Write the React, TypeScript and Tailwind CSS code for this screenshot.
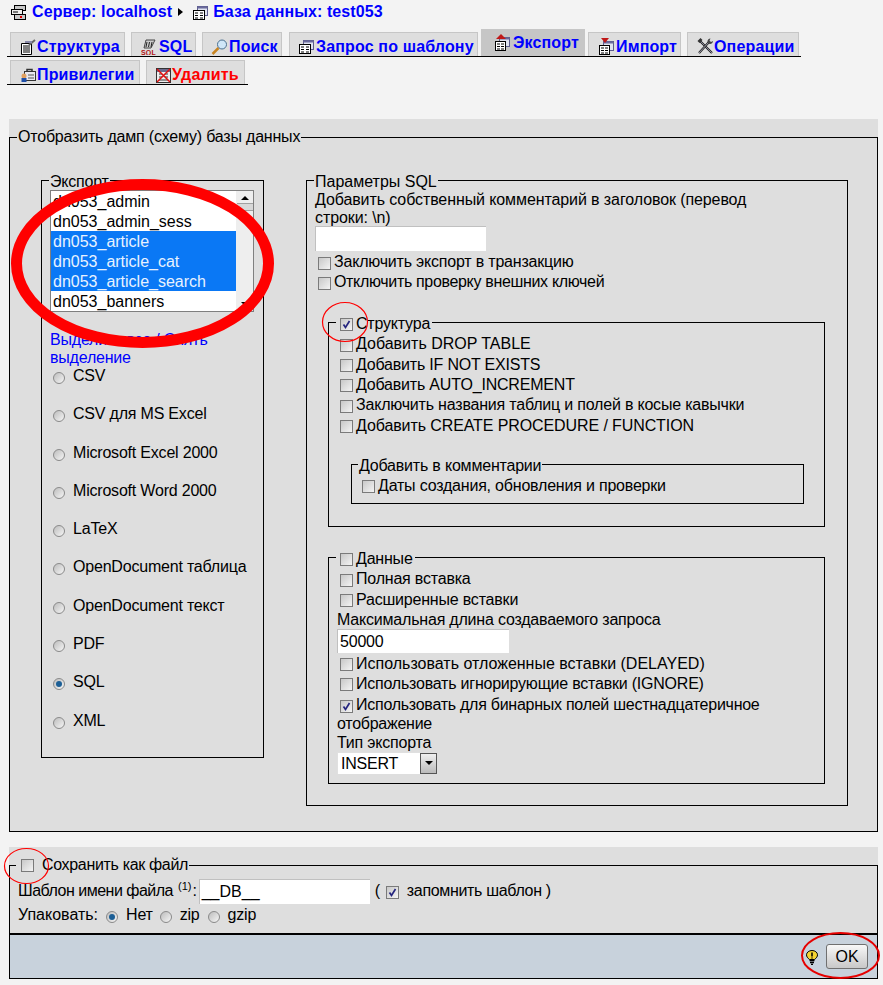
import React from "react";

const Check = ({ on = false, className = "" }: { on?: boolean; className?: string }) => (
  <span className={`inline-flex shrink-0 w-[13px] h-[13px] border border-[#7a7a7a] bg-gradient-to-br from-[#c8c8c8] to-[#f4f4f4] items-center justify-center align-[-2px] ${className}`}>
    {on && (
      <svg width="11" height="11" viewBox="0 0 11 11">
        <path d="M2.5 5.5 L4.5 8.5 L8.5 2" fill="none" stroke="#24247e" strokeWidth="1.7" />
      </svg>
    )}
  </span>
);

const Radio = ({ on = false }: { on?: boolean }) => (
  <span className="inline-flex shrink-0 w-[12px] h-[12px] rounded-full border border-[#8a8a8a] bg-gradient-to-br from-[#bdbdbd] to-[#f6f6f6] items-center justify-center">
    {on && <span className="w-[6px] h-[6px] rounded-full bg-[#1c5f96]" />}
  </span>
);

const Row = ({ on, children, className = "h-[20.4px]" }: { on?: boolean; children: React.ReactNode; className?: string }) => (
  <div className={`flex items-center pt-[2px] ${className}`}>
    <Check on={on} className="mr-[3px] mt-[2px]" />
    <span>{children}</span>
  </div>
);

const DbIcon = () => (
  <svg width="15" height="15" viewBox="0 0 15 15" className="shrink-0">
    <rect x="4.5" y="1.5" width="10" height="9" fill="#dfe3f0" stroke="#5c5c8c" />
    <rect x="4.5" y="1.5" width="10" height="2" fill="#6a6a9c" />
    <rect x="0.5" y="5.5" width="11" height="9" fill="#fff" stroke="#000" />
    <path d="M2 8h3M7 8h3M2 10.5h3M7 10.5h3M2 13h3M7 13h3" stroke="#000" />
  </svg>
);

const ServerIcon = () => (
  <svg width="15" height="15" viewBox="0 0 15 15" className="shrink-0">
    <rect x="3.5" y="0.5" width="11" height="5" fill="#c8c8c8" stroke="#000" />
    <rect x="0.5" y="4.5" width="11" height="5" fill="#eee" stroke="#000" />
    <rect x="3.5" y="9.5" width="11" height="5" fill="#c8c8c8" stroke="#000" />
    <rect x="9" y="11" width="2" height="2" fill="#d00" />
    <path d="M2 7h5" stroke="#000" />
  </svg>
);

const StructIcon = () => (
  <svg width="15" height="16" viewBox="0 0 15 16" className="shrink-0">
    <path d="M0.5 4.5h10v11h-10z" fill="#fff" stroke="#000" />
    <path d="M2 7h7M2 9h7M2 11h7M2 13h7" stroke="#000" />
    <path d="M8 6L14 1" stroke="#666" strokeWidth="2" />
    <path d="M4 3h7" stroke="#8a8aa8" strokeWidth="2" />
  </svg>
);

const SqlIcon = () => (
  <svg width="15" height="16" viewBox="0 0 15 16" className="shrink-0">
    <path d="M5 1h9L10 9H3z" fill="#ccc" stroke="#444" />
    <path d="M6 3l-1 5M8.5 3l-1 5M11 3l-1 5" stroke="#222" />
    <text x="0" y="15.5" fontSize="7" fontFamily="'Liberation Sans', sans-serif" fill="#b01010">SQL</text>
  </svg>
);

const SearchIcon = () => (
  <svg width="17" height="16" viewBox="0 0 17 16" className="shrink-0">
    <circle cx="11" cy="5.5" r="4.5" fill="#cfe6f8" stroke="#4a6f8f" />
    <path d="M7.5 9L1.5 15" stroke="#c88420" strokeWidth="2.5" />
  </svg>
);

const ExportIcon = ({ down = false }: { down?: boolean }) => (
  <svg width="15" height="17" viewBox="0 0 15 17" className="shrink-0">
    <rect x="4.5" y="3.5" width="10" height="9" fill="#dfe3f0" stroke="#5c5c8c" />
    <rect x="4.5" y="3.5" width="10" height="2" fill="#6a6a9c" />
    <rect x="0.5" y="7.5" width="10" height="9" fill="#fff" stroke="#000" />
    <path d="M2 10h3M6 10h3M2 12.5h3M6 12.5h3M2 15h3M6 15h3" stroke="#000" />
    <path d={down ? "M2 0h8L6 5z" : "M6 0l5 5H1z"} fill="#c01818" />
  </svg>
);

const OpsIcon = () => (
  <svg width="17" height="17" viewBox="0 0 17 17" className="shrink-0">
    <path d="M3 3l12 12" stroke="#222" strokeWidth="2.2" />
    <path d="M3 3l12 12" stroke="#a0a0b8" strokeWidth="0.8" />
    <path d="M12 4L2 15" stroke="#222" strokeWidth="2.2" />
    <path d="M12 4L2 15" stroke="#b8b8c8" strokeWidth="0.8" />
    <path d="M13.5 0.5a3 3 0 0 0-3 3.5l2 2a3 3 0 0 0 3.5-3l-2 1-1.5-1.5z" fill="#444" />
    <path d="M0.5 3l3-3 2 2-3 3z" fill="#333" />
  </svg>
);

const PrivIcon = () => (
  <svg width="15" height="15" viewBox="0 0 15 15" className="shrink-0">
    <rect x="3.5" y="4.5" width="11" height="9" fill="#e8e8f0" stroke="#333" />
    <path d="M6 4V2.5h5V4" fill="none" stroke="#333" strokeWidth="1.5" />
    <circle cx="3" cy="9" r="2.5" fill="#e0a060" />
    <rect x="0.5" y="11" width="5" height="4" fill="#1f4fa8" />
    <path d="M7 8h6M7 11h6" stroke="#555" />
  </svg>
);

const DropIcon = () => (
  <svg width="15" height="16" viewBox="0 0 15 16" className="shrink-0">
    <rect x="0.5" y="1.5" width="14" height="14" fill="#eee" stroke="#333" />
    <rect x="1" y="2" width="13" height="3" fill="#6a6a8c" />
    <path d="M3 7h3M9 7h3M3 10h3M9 10h3M3 13h9" stroke="#333" />
    <path d="M1 2l13 13M14 2L1 15" stroke="#e01010" strokeWidth="1.5" />
  </svg>
);

const tabsTop = [
  { label: "Структура", icon: <StructIcon />, cls: "ml-[3px] w-[115px] pl-[10px]" },
  { label: "SQL", icon: <SqlIcon />, cls: "ml-[6px] w-[65px] pl-[9px]", gap: "gap-[3px]" },
  { label: "Поиск", icon: <SearchIcon />, cls: "ml-[6px] w-[80px] pl-[8px]" },
  { label: "Запрос по шаблону", icon: <DbIcon />, cls: "ml-[7px] w-[189px] pl-[9px]", gap: "gap-[2px]" },
  { label: "Экспорт", icon: <ExportIcon />, cls: "ml-[3px] w-[104px] pl-[13px]", active: true, gap: "gap-[3px]" },
  { label: "Импорт", icon: <ExportIcon down />, cls: "ml-[3px] w-[93px] pl-[10px]", gap: "gap-[2px]" },
  { label: "Операции", icon: <OpsIcon />, cls: "ml-[6px] w-[112px] pl-[9px]", gap: "gap-0" },
];

const tabsBottom = [
  { label: "Привилегии", icon: <PrivIcon />, cls: "ml-[3px] w-[130px] pl-[10px]" },
  { label: "Удалить", icon: <DropIcon />, cls: "ml-[6px] w-[99px] pl-[9px]", red: true },
];

type TabDef = { label: string; icon: React.ReactNode; cls: string; active?: boolean; red?: boolean; gap?: string };

const Tab = ({ tab }: { tab: TabDef }) => (
  <div
    className={`flex items-center border-x border-t font-bold tracking-[0.15px] ${tab.gap ?? "gap-[1px]"} ${tab.cls} ${
      tab.active ? "h-[27px] pb-[1px] bg-[#c6c6c6] border-[#c6c6c6]" : "h-[24px] pt-[4px] bg-[#dedede] border-[#c6c6c6]"
    } ${tab.red ? "text-[#ff0000]" : "text-[#0000ff]"}`}
  >
    {tab.icon}
    <span>{tab.label}</span>
  </div>
);

const tables = [
  { name: "dn053_admin" },
  { name: "dn053_admin_sess" },
  { name: "dn053_article", sel: true },
  { name: "dn053_article_cat", sel: true },
  { name: "dn053_article_search", sel: true },
  { name: "dn053_banners" },
];

const formats = ["CSV", "CSV для MS Excel", "Microsoft Excel 2000", "Microsoft Word 2000", "LaTeX", "OpenDocument таблица", "OpenDocument текст", "PDF", "SQL", "XML"];

export default function App() {
  return (
    <div className="relative h-[985px] w-[883px] overflow-hidden bg-[#f3f3f3] text-black text-[16px] leading-[18px] tracking-[-0.2px] font-['Liberation_Sans',sans-serif]">
      {/* breadcrumb */}
      <div className="flex items-center h-[24px] pl-[11px] font-bold tracking-[0.1px] text-[#0000ff]">
        <ServerIcon />
        <span className="ml-[6px]">Сервер: localhost</span>
        <span className="ml-[6px] w-0 h-0 border-y-[4px] border-y-transparent border-l-[5px] border-l-black" />
        <span className="ml-[10px]"><DbIcon /></span>
        <span className="ml-[5px]">База данных: test053</span>
      </div>

      {/* tabs */}
      <div className="mt-[5px] ml-[7px] w-[794px] flex items-end h-[28px] border-b border-black">
        {tabsTop.map((t) => <Tab key={t.label} tab={t} />)}
      </div>
      <div className="mt-[3px] ml-[7px] w-[241px] flex items-end h-[25px] border-b border-black">
        {tabsBottom.map((t) => <Tab key={t.label} tab={t} />)}
      </div>

      {/* dump options */}
      <div className="mt-[34px] ml-[9px] w-[869px] bg-[#dedede] pt-[9px]">
        <fieldset className="border border-black h-[704px] pb-[26px]">
          <legend className="ml-[7px] px-[1px] leading-[18px]">Отобразить дамп (схему) базы данных</legend>
          <div className="flex items-start pl-[31px] pt-[25px]">
            <fieldset className="border border-black w-[223px] h-[587px] pl-[8px]">
              <legend className="-ml-[1px] px-[1px] h-[19px] leading-[21px]">Экспорт</legend>
              <div className="flex w-[204px] h-[122px] border border-[#7f7f7f] bg-white overflow-hidden text-[16px] leading-[20px] tracking-[0px]">
                <div className="w-[185px]">
                  {tables.map((t) => (
                    <div key={t.name} className={`h-[20px] pl-[2px] pt-[1px] ${t.sel ? "bg-[#0a78f5] text-[#e8f2ff]" : ""}`}>{t.name}</div>
                  ))}
                </div>
                <div className="flex-1 flex flex-col items-center py-[5px] bg-[#eeeeee]">
                  <span className="w-0 h-0 border-x-[4px] border-x-transparent border-b-[4px] border-b-black" />
                  <span className="mt-[3px] w-[16px] h-[8px] bg-[#d8d8d8] border-y border-[#a0a0a0]" />
                  <span className="mt-auto w-0 h-0 border-x-[4px] border-x-transparent border-t-[4px] border-t-black" />
                </div>
              </div>
              <div className="mt-[19px] w-[190px] text-[#0000ff]">Выделить все / Снять выделение</div>
              <div className="-mt-[2px]">
                {formats.map((f) => (
                  <div key={f} className="flex items-start h-[38.3px] pt-[1px] leading-[20px]">
                    <span className="ml-[3px] mt-[1px] flex h-[22px] items-center"><Radio on={f === "SQL"} /></span>
                    <span className="ml-[8px]">{f}</span>
                  </div>
                ))}
              </div>
            </fieldset>

            <fieldset className="ml-[42px] border border-black w-[542px] h-[635px] pl-[8px]">
              <legend className="-ml-[1px] px-[1px] h-[19px] leading-[21px] tracking-[0px]">Параметры SQL</legend>
              <div className="w-[450px] pt-[1px] tracking-[-0.1px]">Добавить собственный комментарий в заголовок (перевод строки: \n)</div>
              <div className="-mt-[1px] w-[171px] h-[25px] bg-white border-t border-l border-[#c0c0c0]" />
              <Row className="h-[20px] pl-[3px]">Заключить экспорт в транзакцию</Row>
              <Row className="h-[20px] pl-[3px]"><span className="tracking-[-0.33px]">Отключить проверку внешних ключей</span></Row>

              <fieldset className="mt-[22px] ml-[13px] border border-black w-[497px] h-[214px]">
                <legend className="ml-[7px] leading-[18px]">
                  <span className="flex items-center h-[18px] pt-[4px] pl-[4px] pr-[2px]">
                    <Check on className="mr-[3px]" />
                    Структура
                  </span>
                </legend>
                <div className="pl-[11px] pt-[2px]">
                  <Row><span className="tracking-[0px]">Добавить DROP TABLE</span></Row>
                  <Row>Добавить IF NOT EXISTS</Row>
                  <Row>Добавить AUTO_INCREMENT</Row>
                  <Row>Заключить названия таблиц и полей в косые кавычки</Row>
                  <Row><span className="tracking-[-0.1px]">Добавить CREATE PROCEDURE / FUNCTION</span></Row>
                </div>
                <fieldset className="mt-[21px] ml-[22px] border border-black w-[453px] h-[48px] pl-[10px]">
                  <legend className="-ml-[4px] px-[1px] h-[18px] leading-[20px]">Добавить в комментарии</legend>
                  <div className="pt-[1px]">
                    <Row className="h-[20px]">Даты создания, обновления и проверки</Row>
                  </div>
                </fieldset>
              </fieldset>

              <fieldset className="mt-[21px] ml-[13px] border border-black w-[497px] h-[236px] pl-[8px]">
                <legend className="-ml-[1px] leading-[18px]">
                  <span className="flex items-center h-[18px] pt-[4px] pl-[4px] pr-[2px]">
                    <Check className="mr-[3px]" />
                    Данные
                  </span>
                </legend>
                <div className="pl-[3px] pt-[2px]">
                  <Row>Полная вставка</Row>
                  <Row>Расширенные вставки</Row>
                </div>
                <div className="h-[20px] pt-[1px] leading-[20px]">Максимальная длина создаваемого запроса</div>
                <div className="w-[172px] h-[24px] bg-white border-t border-l border-[#c0c0c0] pl-[2px] leading-[24px]">50000</div>
                <div className="pl-[3px]">
                  <Row className="h-[20px]"><span className="tracking-[0px]">Использовать отложенные вставки (DELAYED)</span></Row>
                  <Row className="h-[20px]"><span className="tracking-[-0.22px]">Использовать игнорирующие вставки (IGNORE)</span></Row>
                </div>
                <div className="w-[470px] leading-[19px] mt-[2px] tracking-[-0.26px]">
                  <Check on className="ml-[3px] mr-[3px]" />
                  Использовать для бинарных полей шестнадцатеричное отображение
                </div>
                <div className="leading-[19px]">Тип экспорта</div>
                <div className="flex w-[100px] h-[22px] bg-white border-t border-l border-[#e0e0e0]">
                  <span className="flex-1 pl-[3px] leading-[21px]">INSERT</span>
                  <span className="w-[17px] h-full flex items-center justify-center border border-[#555] bg-gradient-to-b from-[#f0f0f0] to-[#bbbbbb]">
                    <span className="w-0 h-0 border-x-[4px] border-x-transparent border-t-[4px] border-t-black" />
                  </span>
                </div>
              </fieldset>
            </fieldset>
          </div>
        </fieldset>
      </div>

      {/* save as file */}
      <div className="mt-[15px] ml-[9px] w-[869px] bg-[#dedede] pt-[9px]">
        <fieldset className="border-x border-t border-black h-[77px] pl-[8px]">
          <legend className="-ml-[2px] leading-[18px]">
            <span className="flex items-center pl-[5px] pr-[1px] tracking-[-0.33px]">
              <Check className="mr-[8px]" />
              Сохранить как файл
            </span>
          </legend>
          <div className="flex items-center h-[28px] mt-[3px]">
            <span className="tracking-[-0.5px]">Шаблон имени файла</span>
            <span className="ml-[5px] -mt-[9px] text-[11px] leading-none tracking-[0px]">(1)</span>
            <span className="ml-[1px]">:</span>
            <span className="ml-[2px] w-[171px] h-[25px] bg-white border-t border-l border-[#c0c0c0] pl-[2px] leading-[24px] tracking-[0px]">__DB__</span>
            <span className="ml-[5px]">(</span>
            <Check on className="ml-[6px] mr-[8px] mt-[3px]" />
            <span className="tracking-[-0.33px]">запомнить шаблон )</span>
          </div>
          <div className="flex items-center h-[20px]">
            <span className="tracking-[0px]">Упаковать:</span>
            <span className="ml-[8px] mt-[3px] flex"><Radio on /></span>
            <span className="ml-[8px]">Нет</span>
            <span className="ml-[7px] mt-[3px] flex"><Radio /></span>
            <span className="ml-[8px]">zip</span>
            <span className="ml-[8px] mt-[3px] flex"><Radio /></span>
            <span className="ml-[8px]">gzip</span>
          </div>
        </fieldset>
        <div className="flex items-center justify-end h-[46px] pr-[9px] bg-[#c8d2dc] border-x border-b border-black border-t-2">
          <svg width="12" height="15" viewBox="0 0 12 15" className="mr-[8px] mt-[1px]">
            <path d="M3.5 9.5C1.5 8 .5 6.5 .5 4.8 .5 2.4 3 .5 6 .5s5.5 1.9 5.5 4.3c0 1.7-1 3.2-3 4.7z" fill="#f5d432" stroke="#000" />
            <path d="M6 2.5v4M6 7.5v1" stroke="#000" strokeWidth="1.5" />
            <path d="M3.5 10.5h5M4 12.5h4M5 14.5h2" stroke="#000" strokeWidth="1.3" />
          </svg>
          <button className="w-[42px] h-[25px] rounded-[3px] border border-[#707070] bg-gradient-to-b from-[#f8f8f8] to-[#c8c8c8] text-center leading-[24px] tracking-[0px]">OK</button>
        </div>
      </div>

      {/* red annotations */}
      <svg width="883" height="985" className="absolute inset-0 pointer-events-none">
        <ellipse cx="142.5" cy="263.5" rx="126" ry="79" fill="none" stroke="#ff0000" strokeWidth="11" />
        <ellipse cx="345" cy="322" rx="22.5" ry="19.5" fill="none" stroke="#ff0000" strokeWidth="1.2" />
        <ellipse cx="26.5" cy="866" rx="22" ry="17.5" fill="none" stroke="#ff0000" strokeWidth="1.2" />
        <ellipse cx="840.5" cy="955.5" rx="38.5" ry="22.5" fill="none" stroke="#e60000" strokeWidth="2" />
      </svg>
    </div>
  );
}
